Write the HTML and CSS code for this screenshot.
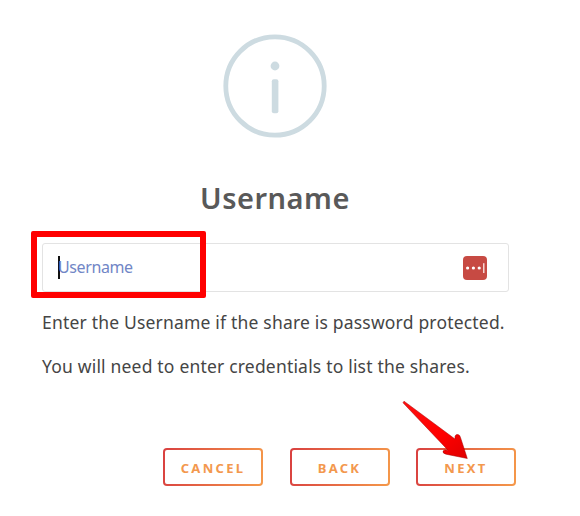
FILE: index.html
```html
<!DOCTYPE html>
<html lang="en">
<head>
<meta charset="utf-8">
<title>Username</title>
<link rel="stylesheet" href="styles.css">
</head>
<body>
<main class="dialog">
  <svg class="info" viewBox="0 0 104 104" aria-hidden="true">
    <circle cx="52" cy="52" r="49.2" fill="none" stroke="#cddbe1" stroke-width="4.8"/>
    <circle cx="52" cy="32" r="4.4" fill="#cddbe1"/>
    <rect x="48.8" y="45.2" width="6.6" height="34" rx="2" fill="#cddbe1"/>
  </svg>
  <h1 class="title"><span>Username</span></h1>
  <div class="field">
    <span class="caret"></span>
    <span class="placeholder">Username</span>
    <svg class="manager" viewBox="0 0 24 24" aria-hidden="true">
      <rect width="24" height="24" rx="4" fill="#c74a43"/>
      <circle cx="4.6" cy="12" r="1.6" fill="#fff"/>
      <circle cx="10.4" cy="12" r="1.6" fill="#fff"/>
      <circle cx="16.2" cy="12" r="1.6" fill="#fff"/>
      <rect x="20" y="7.2" width="1.5" height="9.8" fill="#f5d3d0"/>
    </svg>
    <span class="highlight"></span>
  </div>
  <p class="note first"><span>Enter the Username if the share is password protected.</span></p>
  <p class="note second"><span>You will need to enter credentials to list the shares.</span></p>
  <div class="actions">
    <button class="btn cancel">CANCEL</button>
    <button class="btn back">BACK</button>
    <button class="btn next">NEXT</button>
    <svg class="arrow" viewBox="0 0 70 62" aria-hidden="true">
      <defs><linearGradient id="red" x1="0" y1="0" x2="1" y2="1"><stop offset="0" stop-color="#ff1010"/><stop offset=".6" stop-color="#ff0000"/><stop offset="1" stop-color="#df0000"/></linearGradient></defs>
      <path d="M4 1.2 L55 39 L55 36.5 Q55.5 34 58 34.5 Q60 35 60.5 37.5 L67.3 58.5 L46 54.2 Q42.5 53.4 43 51.2 Q43.5 49.3 48 50.2 L3 2.8Z" fill="url(#red)" stroke="#a30000" stroke-width=".5"/>
    </svg>
  </div>
</main>
</body>
</html>
```
FILE: styles.css
```css
* { box-sizing: border-box; }
body { margin: 0; background: #fff; font-family: "Noto Sans", sans-serif; }
.dialog { width: 580px; height: 516px; padding: 33.5px 71px 0 42px; display: flex; flex-direction: column; overflow: hidden; }
.info { width: 104px; height: 104px; flex: none; margin-left: 181px; }
.title { margin: 40.5px 0 0; height: 40px; line-height: 40px; font-size: 29px; font-weight: 600; color: #595959; text-align: center; letter-spacing: .5px; text-indent: -1px; white-space: nowrap; }
.field { position: relative; flex: none; margin-top: 25px; width: 467px; height: 49px; border: 1px solid #e3e3e3; border-radius: 3px; display: flex; align-items: center; padding: 0 21px 0 15px; }
.caret { width: 2px; height: 23px; background: #111; }
.placeholder { font-size: 16px; color: #7186c6; margin: 0 0 2px -2px; line-height: 22px; letter-spacing: -.4px; }
.manager { width: 24px; height: 24px; margin-left: auto; }
.highlight { position: absolute; left: -12px; top: -13px; width: 175px; height: 67px; border: 6px solid #f00; border-radius: 2px; }
.note { margin: 0; height: 44px; line-height: 44px; font-size: 17.5px; letter-spacing: .19px; color: #454545; white-space: nowrap; }
.note.first { margin-top: 8px; }
.actions { position: relative; display: flex; gap: 26.5px; margin: 60px 0 0 121px; }
.btn { flex: none; width: 100px; height: 38px; padding: 1px 0 0; border: 2px solid transparent; border-radius: 4px; background: linear-gradient(#fff, #fff) padding-box, linear-gradient(100deg, #d94040, #f5994a) border-box; color: #f3984e; font: 700 13px/34px "Noto Sans", sans-serif; letter-spacing: 2.3px; text-align: center; }
.arrow { position: absolute; left: 237px; top: -48px; width: 70px; height: 62px; overflow: visible; }
```
